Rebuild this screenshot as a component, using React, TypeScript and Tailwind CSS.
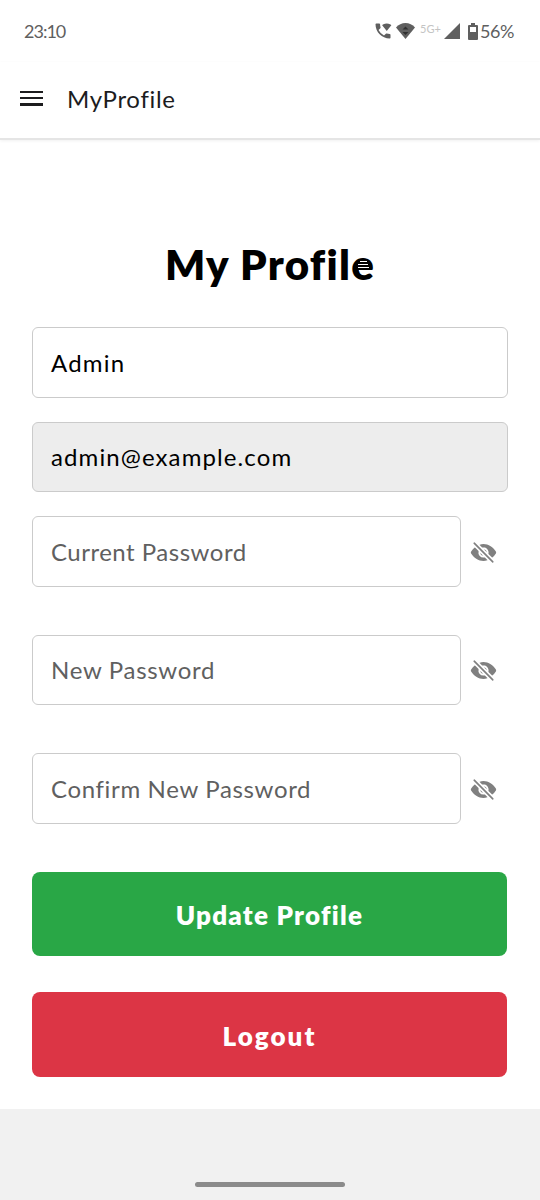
import { IoEyeOff } from "react-icons/io5";
import { MdWifiCalling } from "react-icons/md";

function StatusBar() {
  return (
    <div className="flex h-[62px] items-center justify-between pr-[26px] pl-[24px] text-[#5f5f5f]">
      <span className="text-[18px] tracking-[-1px]">23:10</span>
      <div className="flex items-center">
        <MdWifiCalling className="mr-[3px] size-[20px]" />
        <svg className="mr-[5px] h-[16px] w-[19px]" viewBox="0 0 19 16" fill="currentColor">
          <path d="M9.5 0C5.9 0 2.400 1.500 0 4.500L9.500 16 19 4.500C16.600 1.500 13.100 0 9.500 0Z" />
          <path d="M6.500 6.500L9.500 3.500L12.500 6.500ZM6.500 9H12.500L9.500 12Z" fill="#303030" />
        </svg>
        <span className="mr-[3px] -translate-y-[3px] text-[11px] text-[#c4c4c4]">5G+</span>
        <svg className="mr-[8px] size-[16px]" viewBox="0 0 16 16" fill="currentColor">
          <path d="M16 0V16H0Z" />
        </svg>
        <svg className="mr-[2px] h-[17px] w-[10px]" viewBox="0 0 10 17" fill="currentColor">
          <path fillRule="evenodd" d="M3 0H7V2H9Q10 2 10 3V16Q10 17 9 17H1Q0 17 0 16V3Q0 2 1 2H3ZM2 4V9H8V4Z" />
        </svg>
        <span className="text-[18px] tracking-[-0.400px]">56%</span>
      </div>
    </div>
  );
}

function PasswordField({ label, className }: { label: string; className: string }) {
  return (
    <div className="flex h-[70.5px] items-center">
      <div className="flex h-full w-[429px] items-center rounded-[6px] border border-[#cbcbcb] pt-[1px] pl-[18px] text-[24px] text-[#606060]">
        <span className={className}>{label}</span>
      </div>
      <IoEyeOff className="mt-[2px] ml-[9px] size-[27px] text-[#808080]" />
    </div>
  );
}

export default function App() {
  return (
    <div className="flex h-[1200px] w-[540px] flex-col overflow-hidden bg-white font-['Lato',sans-serif] leading-none [font-variant-ligatures:none]">
      <StatusBar />
      <header className="flex h-[78px] shrink-0 items-center border-b-2 border-[#e5e5e5] pb-[2px] pl-[20px] shadow-[0_1px_3px_rgba(0,0,0,0.06)]">
        <svg className="size-[24px]" viewBox="0 0 24 24" fill="#1c1c1e" shapeRendering="crispEdges">
          <path d="M0 4H23V6H0ZM0 10H23V12H0ZM0 16H23V19H0Z" />
        </svg>
        <span className="ml-[23px] text-[24px] tracking-[0.700px] text-[#1c1c1e]">MyProfile</span>
      </header>
      <main className="flex flex-col px-[32px]">
        <h1 className="mt-[102px] flex h-[44px] items-center justify-center text-[42px] font-extrabold text-black">
          <span className="relative tracking-[1.300px]">
            My Profile
            <svg className="absolute top-[17px] right-[6px] h-[11px] w-[11px]" viewBox="0 0 11 11" shapeRendering="crispEdges">
              <path d="M1 0H10V11H1Z" fill="black" />
              <path d="M2 1H9V2H2ZM0 4H10V5H0ZM0 7H11V8H0ZM1 10H10V11H1Z" fill="white" />
            </svg>
          </span>
        </h1>
        <div className="mt-[41px] flex h-[71px] items-center rounded-[6px] border border-[#cbcbcb] pl-[18px] text-[24px] text-black">
          <span className="tracking-[1.200px]">Admin</span>
        </div>
        <div className="mt-[24px] mb-[24px] flex h-[70px] items-center rounded-[6px] border border-[#cbcbcb] bg-[#ededed] pl-[18px] text-[24px] text-black">
          <span className="tracking-[1.100px]">admin@example.com</span>
        </div>
        <div className="flex flex-col gap-[48px]">
          <PasswordField label="Current Password" className="tracking-[0.500px]" />
          <PasswordField label="New Password" className="tracking-[0.700px]" />
          <PasswordField label="Confirm New Password" className="tracking-[0.650px]" />
        </div>
        <button className="mt-[48.500px] flex h-[84px] w-[475px] items-center justify-center rounded-[8px] bg-[#29a746] pt-[2px] text-[26px] font-extrabold text-white">
          <span className="tracking-[1.250px]">Update Profile</span>
        </button>
        <button className="mt-[36px] flex h-[85px] w-[475px] items-center justify-center rounded-[8px] bg-[#dc3545] pt-[3px] text-[26px] font-extrabold text-white">
          <span className="tracking-[2px]">Logout</span>
        </button>
      </main>
      <footer className="mt-[32px] flex flex-1 items-end justify-center bg-[#f1f1f1] pb-[13px]">
        <div className="h-[5px] w-[150px] rounded-full bg-[#8b8b8b]" />
      </footer>
    </div>
  );
}
